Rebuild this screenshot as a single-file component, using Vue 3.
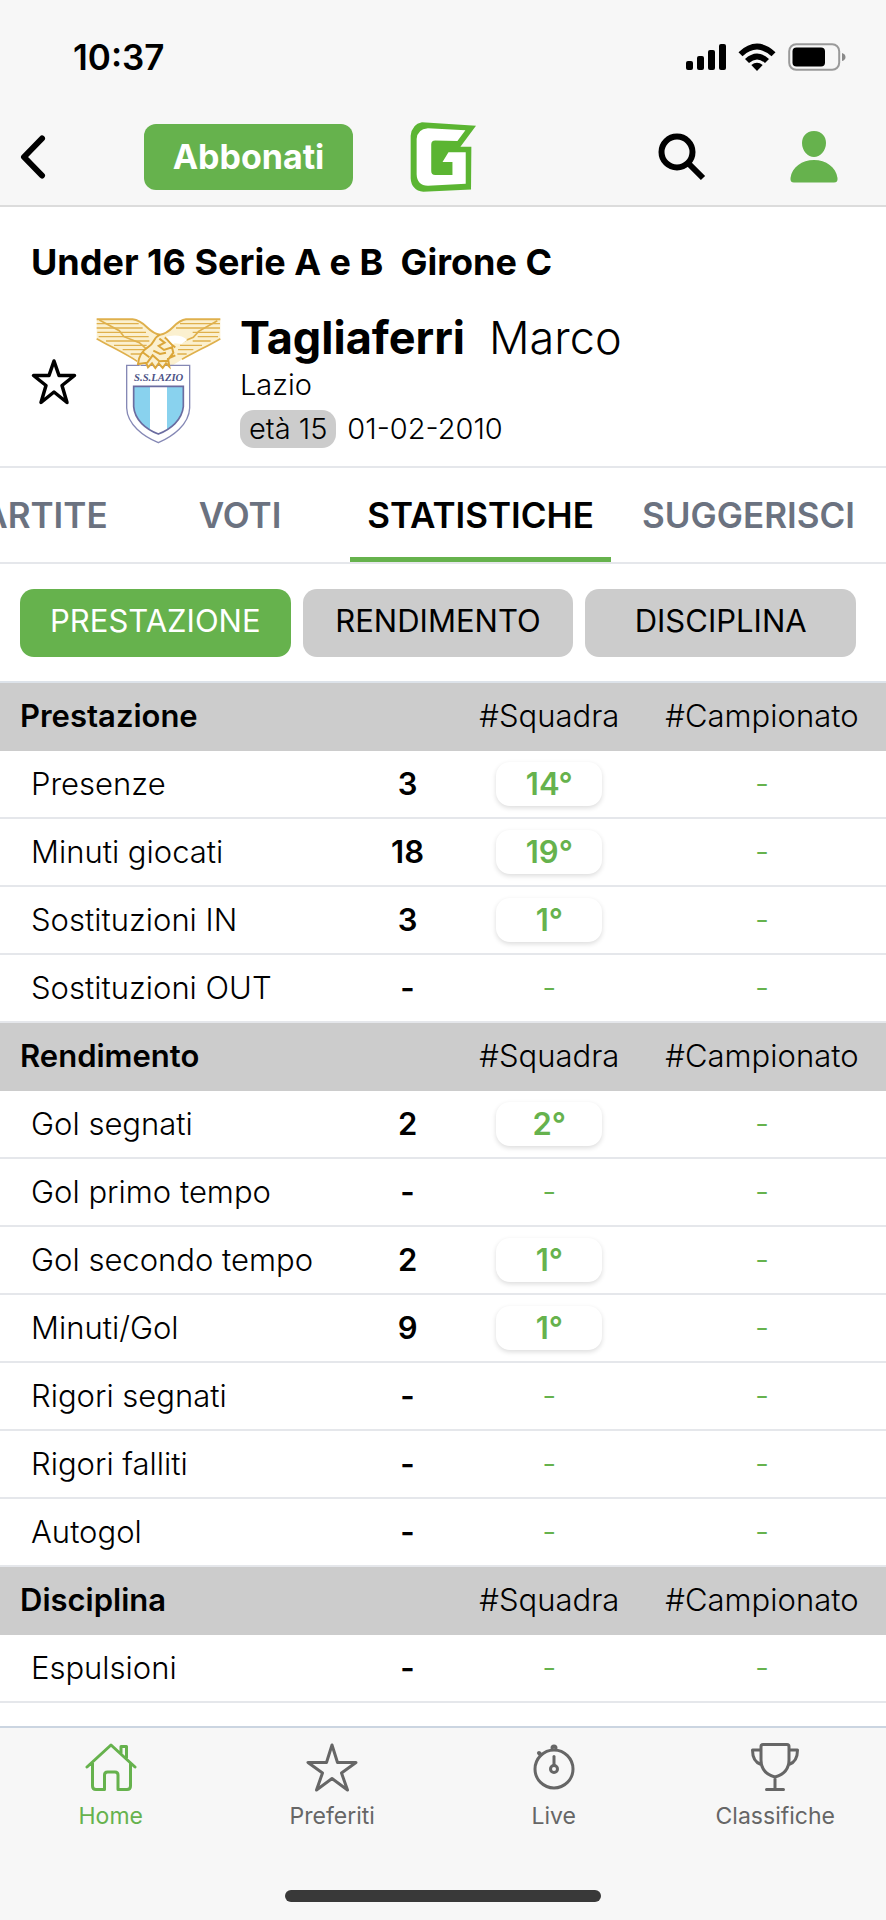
<script setup>
import { ref } from 'vue'

const tabs = ['PARTITE', 'VOTI', 'STATISTICHE', 'SUGGERISCI']
const activeTab = ref('STATISTICHE')
const filters = ['PRESTAZIONE', 'RENDIMENTO', 'DISCIPLINA']
const activeFilter = ref('PRESTAZIONE')

const groups = [
  {
    title: 'Prestazione',
    rows: [
      ['Presenze', '3', '14°', '-'],
      ['Minuti giocati', '18', '19°', '-'],
      ['Sostituzioni IN', '3', '1°', '-'],
      ['Sostituzioni OUT', '-', '-', '-'],
    ],
  },
  {
    title: 'Rendimento',
    rows: [
      ['Gol segnati', '2', '2°', '-'],
      ['Gol primo tempo', '-', '-', '-'],
      ['Gol secondo tempo', '2', '1°', '-'],
      ['Minuti/Gol', '9', '1°', '-'],
      ['Rigori segnati', '-', '-', '-'],
      ['Rigori falliti', '-', '-', '-'],
      ['Autogol', '-', '-', '-'],
    ],
  },
  { title: 'Disciplina', rows: [['Espulsioni', '-', '-', '-']] },
]
</script>

<template>
  <div class="app">
    <header class="top">
      <div class="status">
        <span class="clock">10:37</span>
        <svg class="signal" viewBox="0 0 40 26" aria-hidden="true">
          <rect x="0" y="17" width="7" height="9" rx="2" />
          <rect x="11" y="12" width="7" height="14" rx="2" />
          <rect x="22" y="6" width="7" height="20" rx="2" />
          <rect x="33" y="0" width="7" height="26" rx="2" />
        </svg>
        <svg class="wifi" viewBox="0 0 38 28" aria-hidden="true">
          <path d="M0.5 9.2 Q19 -8 37.500 9.200 L33.500 13.200 Q19 0 4.500 13.200 Z" />
          <path d="M7 16 Q19 5 31 16 L27 20 Q19 13 11 20 Z" />
          <path d="M13.300 22 Q19 17.500 24.700 22 L19 28 Z" />
        </svg>
        <svg class="battery" viewBox="0 0 58 28" aria-hidden="true">
          <rect x="1.200" y="1.200" width="50" height="25.600" rx="7" fill="none" stroke="#9a9a9a" stroke-width="2" />
          <rect x="4.500" y="4.500" width="32.500" height="19" rx="4" fill="#000" />
          <path d="M54 10 Q57.500 11 57.500 14 T54 18 Z" fill="#8a8a8a" />
        </svg>
      </div>
      <div class="bar">
        <button class="icon-btn" aria-label="Indietro">
          <svg class="back" viewBox="0 0 26 44"><path d="M22 3.500 L4 22 L22 40.500" fill="none" stroke="#000" stroke-width="6" stroke-linecap="round" stroke-linejoin="round" /></svg>
        </button>
        <button class="subscribe">Abbonati</button>
        <a class="brand" href="#" aria-label="Pagina iniziale">
          <svg viewBox="30 18 202 216">
            <path d="M66 21 Q36 26 32 62 L32 190 Q34 226 70 231 L214 224 L215 95 L182 95 L229 32 Z" fill="#5bb532" />
            <path d="M84 39 Q52 41 50 72 L50 178 Q51 211 84 213 L198 207 L198 112 L146 112 L128 141 L158 141 L158 180 L106 180 Q94 180 94 168 L94 88 Q94 76 106 76 L173 78 L197 45 Z" fill="#fff" />
          </svg>
        </a>
        <button class="icon-btn search" aria-label="Cerca">
          <svg viewBox="0 0 48 48"><circle cx="19" cy="19" r="15.500" fill="none" stroke="#000" stroke-width="6" /><path d="M30 30 L45 45" stroke="#000" stroke-width="6" /></svg>
        </button>
        <button class="icon-btn person" aria-label="Profilo">
          <svg viewBox="0 0 48 52"><path d="M24 0 C32 0 36 6 36 12 C36 20 30 26 24 26 C18 26 12 20 12 12 C12 6 16 0 24 0 Z M0.500 47 C2 36 12 29 24 29 C36 29 46 36 47.500 47 Q48 51.500 44 51.500 L4 51.500 Q0 51.500 0.500 47 Z" fill="#66b24d" /></svg>
        </button>
      </div>
    </header>

    <main>
      <section class="player">
        <h1>Under 16 Serie A e B&nbsp; Girone C</h1>
        <div class="card">
          <button class="icon-btn fav" aria-label="Aggiungi ai preferiti">
            <svg viewBox="0 0 46 50"><path d="M23 5 L28 19.500 L43.500 19.500 L31 29.500 L36 46.500 L23 36 L10 46.500 L15 29.500 L2.500 19.500 L18 19.500 Z" fill="none" stroke="#000" stroke-width="3.500" stroke-linejoin="round" /></svg>
          </button>
          <svg class="crest" viewBox="0 0 375 378" role="img" aria-label="S.S. Lazio">
            <path d="M2 4 H110 C150 8 155 46 192 50 C228 46 235 8 270 4 H373 V62 C340 82 300 100 262 122 L230 142 H150 L118 122 C80 100 36 84 2 62 Z" fill="#fbf0cf" />
            <g fill="none" stroke="#dfb04c" stroke-width="4">
              <path d="M2 4 H110 C150 8 155 46 192 50 C228 46 235 8 270 4 H373" stroke-width="6" />
              <path d="M2 17 H128 M2 30 H140 M4 43 H150 M8 56 H158 M30 69 H160 M54 82 H152 M80 95 H146 M104 108 H138 M372 17 H252 M372 30 H240 M370 43 H290 M366 56 H305 M344 69 H290 M318 82 H252 M292 95 H246 M272 108 H244" />
              <path d="M2 62 C40 84 84 104 124 130 M373 62 C340 82 300 100 258 124 M10 6 L70 38 L84 56 L130 74 L150 92 M364 8 L308 40 L292 58 L252 74" stroke-width="5" />
            </g>
            <path d="M92 142 H281 V270 C279 320 230 355 187 374 C142 355 94 320 92 270 Z" fill="#fff" stroke="#8588b5" stroke-width="4" />
            <path d="M204 58 Q250 44 274 66 L256 78 L236 76 L224 84 Z" fill="#fff" />
            <path d="M192 50 C172 58 176 76 158 86 C142 96 128 112 124 134 L132 144 L146 132 L154 148 L166 136 L176 150 L188 136 L200 150 L208 136 L220 146 L218 122 L240 112 L228 88 L206 74 L190 62 Z" fill="#fbf0cf" />
            <path d="M192 50 C172 58 176 76 158 86 C142 96 128 112 126 138 L154 134 L170 112 L190 130 L214 128 L232 104 L228 88 L204 96 L188 84 L206 74 L190 62 M206 58 C218 66 222 80 238 88 M142 104 L160 118 M172 98 L192 108 L210 104 M150 134 L156 148 L168 136 L178 150 L188 136 L200 150 L210 136 L220 146 L216 122 L238 112" fill="none" stroke="#dba63a" stroke-width="6" />
            <path d="M113 205 H262 V266 C258 306 224 334 187 348 C150 334 116 306 113 266 Z" fill="#89d2ee" />
            <path d="M162 205 H213 V336 L187 348 L162 336 Z" fill="#fff" />
            <path d="M113 205 H262 V266 C258 306 224 334 187 348 C150 334 116 306 113 266 Z" fill="none" stroke="#6b6ca0" stroke-width="5" />
            <text x="188" y="188" text-anchor="middle" class="crest-text">S.S.LAZIO</text>
          </svg>
          <div class="who">
            <p class="name"><strong>Tagliaferri</strong><span>Marco</span></p>
            <p class="team">Lazio</p>
            <p class="birth"><span class="age">età 15</span>01-02-2010</p>
          </div>
        </div>
      </section>

      <nav class="tabs" aria-label="Sezioni">
        <button v-for="t in tabs" :key="t" :class="['tab', { on: t === activeTab }]" @click="activeTab = t">{{ t }}</button>
      </nav>

      <div class="filters">
        <button v-for="f in filters" :key="f" :class="['filter', { on: f === activeFilter }]" @click="activeFilter = f">{{ f }}</button>
      </div>

      <table class="stats">
        <colgroup><col class="c1" /><col class="c2" /><col class="c3" /><col class="c4" /></colgroup>
        <tbody v-for="g in groups" :key="g.title">
          <tr class="group">
            <th scope="colgroup" colspan="2">{{ g.title }}</th>
            <th scope="col">#Squadra</th>
            <th scope="col">#Campionato</th>
          </tr>
          <tr v-for="r in g.rows" :key="r[0]">
            <th scope="row">{{ r[0] }}</th>
            <td class="value">{{ r[1] }}</td>
            <td class="rank"><a v-if="r[2] !== '-'" class="chip" href="#">{{ r[2] }}</a><template v-else>-</template></td>
            <td class="rank">{{ r[3] }}</td>
          </tr>
        </tbody>
      </table>
    </main>

    <footer class="bottom">
      <nav class="menu" aria-label="Principale">
        <a href="#" class="item on">
          <svg viewBox="0 0 52 50"><path d="M2 25 L26 3 L50 25 M7.500 21 V44 Q7.500 47.500 11 47.500 H19.500 V33 Q19.500 30 22.500 30 H30 Q33 30 33 33 V47.500 H42 Q45.500 47.500 45.500 44 V21 M36 11 V4.500 H41.500 V16" /></svg>
          Home
        </a>
        <a href="#" class="item">
          <svg viewBox="0 0 52 50"><path d="M26 3 L31.500 20.500 H50 L35.500 31 L41.500 48 L26 36.500 L10.500 48 L16.500 31 L2 20.500 H20.500 Z" /></svg>
          Preferiti
        </a>
        <a href="#" class="item">
          <svg viewBox="0 0 52 50"><circle cx="26" cy="27" r="19" /><circle cx="26" cy="27" r="3.500" /><path d="M26 14.500 V23.500" /><path d="M24.500 6 a1.500 1.500 0 0 1 3 0 Z M11 11 L12.500 12.500" stroke-width="4" /></svg>
          Live
        </a>
        <a href="#" class="item">
          <svg viewBox="0 0 52 50"><path d="M14 2.500 H38 Q40 2.500 40 4.500 V18 C40 28 33 33 26 35 C19 33 12 28 12 18 V4.500 Q12 2.500 14 2.500 Z M12 8 H3.500 C3.500 16 6 20.500 12 22.500 M40 8 H48.500 C48.500 16 46 20.500 40 22.500 M26 35 V47.500 M17.500 47.500 H34.500" /></svg>
          Classifiche
        </a>
      </nav>
      <div class="indicator"></div>
    </footer>
  </div>
</template>

<style>
body {
  margin: 0;
  background: #fff;
}
</style>

<style scoped>
.app {
  display: flex;
  flex-direction: column;
  min-height: 100vh;
  background: #fff;
  color: #000;
  font-family: Inter, "Open Sans", sans-serif;
  font-size: 31px;
  line-height: 36px;
}
main {
  flex: 1;
}
button {
  padding: 0;
  border: 0;
  background: none;
  color: inherit;
  font: inherit;
  cursor: pointer;
}
a {
  color: inherit;
  text-decoration: none;
}
p,
h1 {
  margin: 0;
}
svg {
  display: block;
}
.top {
  background: #f7f7f7;
  border-bottom: 2px solid #dcdcdc;
}
.status {
  display: flex;
  align-items: center;
  height: 113px;
  padding: 0 40px 0 73px;
}
.clock {
  flex: 1;
  font-size: 35px;
  font-weight: 600;
}
.signal {
  width: 40px;
  height: 26px;
  margin-right: 12px;
}
.wifi {
  width: 38px;
  height: 28px;
  margin-right: 12px;
}
.battery {
  width: 58px;
  height: 28px;
}
.bar {
  display: flex;
  align-items: center;
  height: 88px;
  padding: 0 48px 4px 20px;
}
.back {
  width: 26px;
  height: 44px;
}
.subscribe {
  width: 209px;
  height: 66px;
  margin-left: 98px;
  border-radius: 12px;
  background: #66b24d;
  color: #fff;
  font-size: 34px;
  font-weight: 700;
}
.brand {
  margin-left: 57px;
}
.brand svg {
  width: 67px;
  height: 72px;
}
.search {
  margin-left: auto;
}
.search svg {
  width: 48px;
  height: 48px;
}
.person {
  margin-left: 84px;
}
.person svg {
  width: 48px;
  height: 52px;
}
.player {
  padding: 35px 31px 18px;
  border-bottom: 2px solid #e5e7eb;
}
h1 {
  font-size: 36px;
  line-height: 40px;
  font-weight: 700;
}
.card {
  display: flex;
  align-items: center;
  margin-top: 31px;
}
.fav svg {
  width: 46px;
  height: 50px;
}
.crest {
  width: 125px;
  height: 126px;
  margin: 0 19px;
}
.crest-text {
  font: italic 700 32px "Liberation Serif", serif;
  fill: #4d5487;
}
.name {
  display: flex;
  gap: 24px;
  font-size: 45px;
  line-height: 50px;
}
.name span {
  font-weight: 300;
}
.team {
  margin-top: 4px;
  font-size: 29px;
  line-height: 36px;
}
.birth {
  display: flex;
  align-items: center;
  gap: 11px;
  margin-top: 7px;
  font-size: 29px;
}
.team,
.birth {
  font-weight: 350;
}
.age {
  padding: 1px 9px;
  border-radius: 14px;
  background: #ccc;
}
.tabs {
  display: flex;
  justify-content: flex-end;
  height: 94px;
  overflow: hidden;
  border-bottom: 2px solid #e5e7eb;
}
.tab {
  flex: 0 0 275px;
  box-sizing: border-box;
  border-top: 5px solid transparent;
  border-bottom: 5px solid transparent;
  color: #6b7280;
  font-size: 35px;
  font-weight: 600;
}
.tab:nth-child(1) {
  flex-basis: 190px;
}
.tab:nth-child(2) {
  flex-basis: 220px;
}
.tab:nth-child(3) {
  flex-basis: 261px;
}
.tab.on {
  border-bottom-color: #66b24d;
  color: #000;
}
.filters {
  display: grid;
  grid-template-columns: repeat(3, 1fr);
  gap: 12px;
  padding: 25px 30px 24px 20px;
}
.filter {
  height: 68px;
  padding-bottom: 4px;
  border-radius: 14px;
  background: #ccc;
}
.filter.on {
  background: #66b24d;
  color: #fff;
}
.stats {
  width: 100%;
  table-layout: fixed;
  border-collapse: separate;
  border-spacing: 0;
  border-top: 2px solid #dde3ea;
}
.c1 {
  width: 40%;
}
.c2 {
  width: 12%;
}
.c3 {
  width: 20%;
}
.c4 {
  width: 28%;
}
.stats th,
.stats td {
  height: 66px;
  padding: 0;
  border-bottom: 2px solid #e5e7eb;
  font-weight: 350;
  text-align: center;
  white-space: nowrap;
}
.stats th:first-child {
  padding-left: 31px;
  text-align: left;
}
.stats .group th {
  border-color: #ccc;
  background: #ccc;
}
.stats .group th:first-child {
  padding-left: 20px;
  font-weight: 600;
}
.stats .value {
  font-weight: 600;
}
.stats .rank {
  color: #66b24d;
}
.chip {
  display: block;
  width: 106px;
  margin: 0 auto;
  padding: 4px 0;
  border-radius: 14px;
  background: #fff;
  box-shadow: 0 2px 5px rgba(0, 0, 0, 0.14);
  font-weight: 600;
}
.bottom {
  border-top: 2px solid #cbd5e1;
  background: #f7f7f7;
}
.menu {
  display: grid;
  grid-template-columns: repeat(4, 1fr);
  padding-top: 14px;
}
.item {
  display: flex;
  flex-direction: column;
  align-items: center;
  gap: 10px;
  color: #666;
  font-size: 23px;
  line-height: 28px;
}
.item.on {
  color: #66b24d;
}
.item svg {
  width: 52px;
  height: 50px;
  fill: none;
  stroke: currentColor;
  stroke-width: 3;
  stroke-linecap: round;
  stroke-linejoin: round;
}
.indicator {
  width: 316px;
  height: 12px;
  margin: 60px auto 18px;
  border-radius: 6px;
  background: #393939;
}
</style>
